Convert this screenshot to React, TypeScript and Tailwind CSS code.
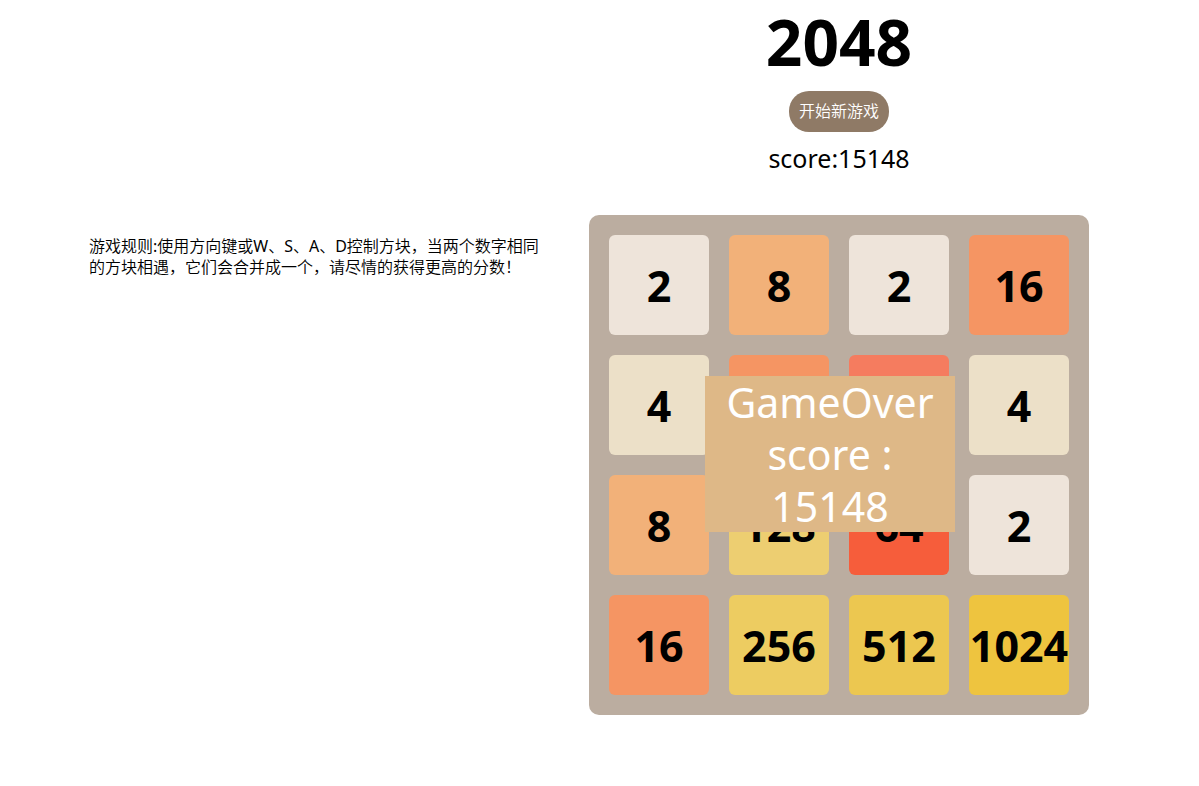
const tileColors: Record<number, string> = {
  2: "bg-[#eee4da]",
  4: "bg-[#ece0c8]",
  8: "bg-[#f2b179]",
  16: "bg-[#f59563]",
  32: "bg-[#f57c5f]",
  64: "bg-[#f65d3b]",
  128: "bg-[#edce71]",
  256: "bg-[#edcc61]",
  512: "bg-[#ecc750]",
  1024: "bg-[#eec43f]",
};

const cells = [2, 8, 2, 16, 4, 16, 32, 4, 8, 128, 64, 2, 16, 256, 512, 1024];
const score = 15148;

function Tile({ value }: { value: number }) {
  return (
    <div className={`flex size-[100px] items-center justify-center rounded-md ${tileColors[value]}`}>
      <span className="text-[43px] leading-none font-bold">{value}</span>
    </div>
  );
}

export default function App() {
  return (
    <main className="flex justify-center bg-white pr-[21px] pb-16 font-['Noto_Sans','Noto_Sans_CJK_SC',sans-serif] text-black">
      <aside className="mt-[236px] mr-10 w-[460px] shrink-0">
        <p className="font-['Noto_Sans','Noto_Sans_CJK_SC_DemiLight','Noto_Sans_CJK_SC',sans-serif] text-base leading-[21px]">
          游戏规则:使用方向键或W、S、A、D控制方块，当两个数字相同的方块相遇，它们会合并成一个，请尽情的获得更高的分数！
        </p>
      </aside>
      <section className="w-[500px] shrink-0">
        <header className="flex flex-col items-center">
          <h1 className="text-[64px] leading-[84px] font-bold">2048</h1>
          <button type="button" className="mt-[7px] rounded-[20px] bg-[#8f7a66] px-[10px] py-[10px] text-base leading-[21px] font-[350] text-white">
            开始新游戏
          </button>
          <p className="mt-[9px] text-[25px] leading-[34px]">score:{score}</p>
        </header>
        <div className="relative mt-10 grid grid-cols-4 gap-5 rounded-[10px] bg-[#bbada0] p-5">
          {cells.map((value, i) => (
            <Tile key={i} value={value} />
          ))}
          <div role="status" className="absolute top-[161px] left-[116px] w-[250px] bg-[#deb887] text-center text-[41px] leading-[52px] text-white">
            GameOver
            <br />
            score :
            <br />
            {score}
          </div>
        </div>
      </section>
    </main>
  );
}
